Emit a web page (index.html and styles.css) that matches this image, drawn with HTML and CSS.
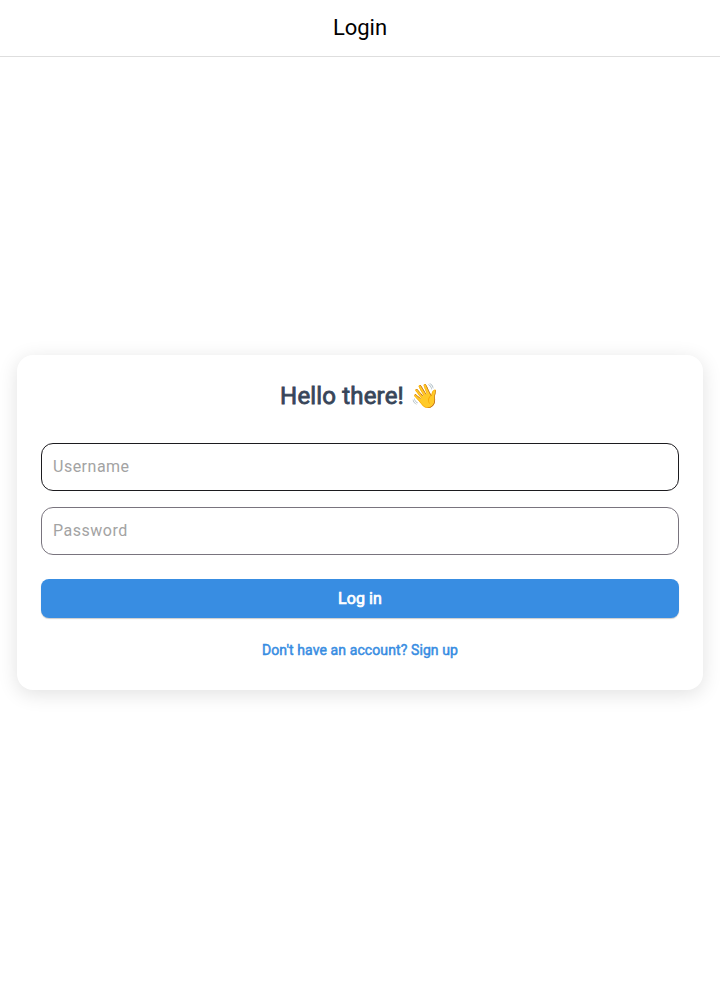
FILE: index.html
```html
<!DOCTYPE html>
<html lang="en">
<head>
<meta charset="utf-8">
<title>Login</title>
<link rel="stylesheet" href="styles.css">
</head>
<body>
<header class="topbar"><h1 class="topbar-title">Login</h1></header>
<main class="content">
<form class="card">
<h2 class="greeting"><span class="greeting-text">Hello there!</span> 👋</h2>
<input class="field field-active" type="text" placeholder="Username">
<input class="field" type="password" placeholder="Password">
<button class="submit" type="button">Log in</button>
<a class="signup">Don't have an account? Sign up</a>
</form>
</main>
</body>
</html>
```
FILE: styles.css
```css
* { box-sizing: border-box; }
body {
  margin: 0;
  height: 100vh;
  display: flex;
  flex-direction: column;
  background: #fff;
  font-family: Roboto, sans-serif;
}
.topbar {
  height: 57px;
  display: flex;
  align-items: center;
  justify-content: center;
  background: #fff;
  border-bottom: 1px solid #dedede;
}
.topbar-title {
  margin: 0;
  font-size: 22px;
  font-weight: 400;
  line-height: 28px;
  color: #000;
}
.content {
  flex: 1;
  display: flex;
  align-items: center;
  padding: 0 17px;
}
.card {
  width: 100%;
  height: 335px;
  padding: 24px;
  display: flex;
  flex-direction: column;
  background: #fff;
  border-radius: 16px;
  box-shadow: 0 4px 20px rgba(0, 0, 0, 0.12);
}
.greeting {
  margin: 0 0 30px;
  font-size: 24px;
  font-weight: 400;
  line-height: 34px;
  text-align: center;
  color: #374559;
}
.greeting-text {
  letter-spacing: 0.17px;
  -webkit-text-stroke: 0.8px currentColor;
}
.field {
  height: 48px;
  margin: 0 0 16px;
  padding: 0 11px 2px;
  border: 1px solid #79747e;
  border-radius: 12px;
  background: #fff;
  font: 400 16px Roboto, sans-serif;
  letter-spacing: 0.5px;
}
.field::placeholder { color: #a3a3a3; }
.field-active { border-color: #1c1b1f; }
.submit {
  height: 39px;
  margin: 8px 0 0;
  padding: 0;
  border: 0;
  border-radius: 8px;
  background: #388de2;
  box-shadow: 0 1px 1px rgba(0, 0, 0, 0.2);
  color: #fff;
  font: 400 16px Roboto, sans-serif;
  letter-spacing: 0.1px;
  -webkit-text-stroke: 0.7px currentColor;
}
.signup {
  margin-top: 22px;
  font-size: 14px;
  font-weight: 400;
  line-height: 20px;
  letter-spacing: 0.1px;
  -webkit-text-stroke: 0.5px currentColor;
  text-align: center;
  color: #388de2;
}
```
